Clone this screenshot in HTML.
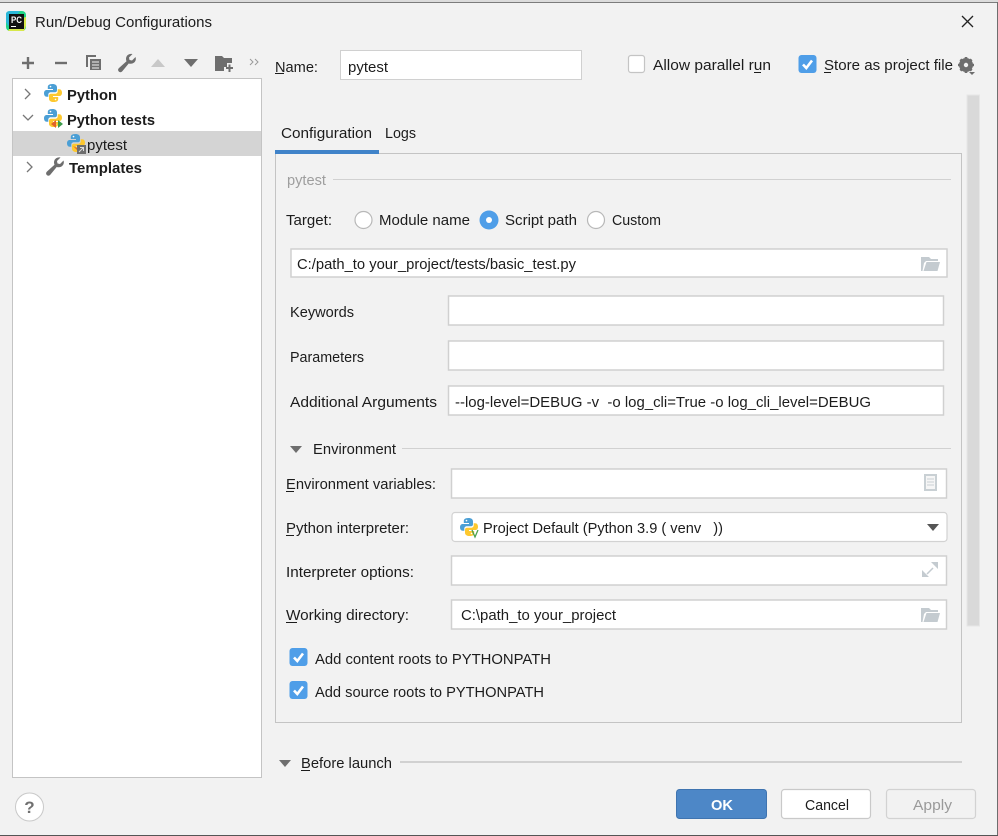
<!DOCTYPE html>
<html><head><meta charset="utf-8"><title>Run/Debug Configurations</title>
<style>
html,body{margin:0;padding:0;background:#f2f2f2;width:998px;height:836px;overflow:hidden}
svg{display:block}
text{font-family:"Liberation Sans",sans-serif;font-size:15px;fill:#1c1c1c}
.b{font-weight:bold}
.f{fill:#fff;stroke:#d0d0d0;stroke-width:1.500}
</style></head><body>
<svg width="998" height="836" viewBox="0 0 998 836" xmlns="http://www.w3.org/2000/svg">
<defs>
<g id="py">
<path d="M8.500 0C4.500 0 3.800 1.500 3.800 3.300V5H9V6H2.800C1 6 0 7.300 0 9.300C0 11.400 1 12.800 2.800 12.800H4.300V10.800C4.300 9.200 5.500 8.300 7 8.300H11C12.200 8.300 13 7.500 13 6.300V3.300C13 1.300 11.200 0 8.500 0Z" fill="#4b9fd5"/>
<path d="M9.500 18C13.500 18 14.200 16.500 14.200 14.700V13H9V12H15.200C17 12 18 10.700 18 8.700C18 6.600 17 5.200 15.200 5.200H13.700V7.200C13.700 8.800 12.500 9.700 11 9.700H7C5.800 9.700 5 10.500 5 11.700V14.700C5 16.700 6.800 18 9.500 18Z" fill="#fdc82f"/>
<circle cx="6.500" cy="2.600" r=".8" fill="#fff"/><circle cx="11.500" cy="15.400" r=".8" fill="#fff"/>
</g>
<g id="chk">
<rect width="18" height="18" rx="3" fill="#4f9ee8"/>
<path d="M4.500 9.500L7.800 13L13.500 5.500" fill="none" stroke="#fff" stroke-width="2.600"/>
</g>
<path id="folder" d="M0 1H8L10 3H17V5H5L3 7L1.500 15H0Z M5.500 6H19L16.500 15H2.500Z" fill="#c4cbd0"/>
<path id="wr" d="M17.500 3.500L14 7 11.500 6.500 11 4 14.500 .5C11.500-.3 8 1.500 8 5.500 8 6.300 8.200 7 8.500 7.700L1 14.500C-.2 15.700-.2 17 .8 18 1.800 19 3.200 19 4.300 17.800L10.700 10C15.500 11.300 19 7.500 17.500 3.500Z" fill="#6e6e6e"/>
</defs>

<!-- window -->
<rect width="998" height="836" fill="#f2f2f2"/>
<rect x="0" y="0" width="998" height="2" fill="#dcdcdc"/>
<rect x="0" y="2" width="998" height="1" fill="#7c7c7c"/>
<rect x="997" y="2" width="1" height="834" fill="#6e6e6e"/>
<rect x="0" y="835" width="998" height="1" fill="#555"/>

<!-- title -->
<rect x="6" y="11" width="20" height="20" rx="4" fill="#21d789"/>
<path d="M8 31L24 31L26 26V17L14 20Z" fill="#d7e84a"/>
<path d="M6 14C6 12 8 11 10 11H20L8 26L6 22Z" fill="#2bb7d8"/>
<rect x="9" y="14" width="15" height="15" fill="#111"/>
<text x="11" y="23" style="font-size:9px;font-weight:bold;fill:#fff" textLength="11" lengthAdjust="spacingAndGlyphs">PC</text>
<rect x="11" y="26" width="5" height="1" fill="#fff"/>
<text x="35" y="27" textLength="177" lengthAdjust="spacingAndGlyphs">Run/Debug Configurations</text>
<path d="M962 16L973 27M973 16L962 27" stroke="#222" stroke-width="1.300" fill="none"/>

<!-- toolbar -->
<path d="M22 63H34M28 57V69" stroke="#6e6e6e" stroke-width="2.400" fill="none"/>
<path d="M55 63H67" stroke="#6e6e6e" stroke-width="2.400" fill="none"/>
<path d="M86 55H96V57H88V67H86Z" fill="#6e6e6e"/><path d="M90 59H101V70H90Z" fill="#6e6e6e"/><path d="M92 62H99M92 65H99M92 68H99" stroke="#f2f2f2" stroke-width="1"/>
<use href="#wr" x="118" y="53.500"/>
<path d="M151 67L158 59L165 67Z" fill="#c8c8c8"/>
<path d="M184 59H198L191 67Z" fill="#6e6e6e"/>
<path d="M215 56H222L224 58H232V63H227V67H224V71H215Z" fill="#6e6e6e"/><path d="M226 68H233M229.500 64.500V72" stroke="#6e6e6e" stroke-width="2"/>
<path d="M250 59L253 62L250 65M255 59L258 62L255 65" stroke="#999" stroke-width="1" fill="none"/>

<!-- left tree -->
<rect x="12.500" y="78.500" width="249" height="699" fill="#fff" stroke="#c4c4c4"/>
<rect x="13" y="131" width="248" height="25" fill="#d4d4d4"/>
<path d="M25 89L30 94L25 99" stroke="#777" stroke-width="1.300" fill="none"/>
<use href="#py" x="44" y="84"/>
<text x="67" y="100" class="b" textLength="50" lengthAdjust="spacingAndGlyphs">Python</text>
<path d="M23 115L28 120L33 115" stroke="#777" stroke-width="1.300" fill="none"/>
<use href="#py" x="44" y="109"/>
<path d="M56 120L51 124L56 128Z" fill="#e0632c"/><path d="M58 120L63 124L58 128Z" fill="#3b9b4a"/>
<text x="67" y="125" class="b" textLength="88" lengthAdjust="spacingAndGlyphs">Python tests</text>
<use href="#py" x="67" y="134"/>
<rect x="77" y="145" width="9" height="9" fill="#6e6e6e"/><path d="M79 152L83 148M80 147.500H83.500V151" stroke="#ddd" stroke-width="1" fill="none"/>
<path d="M73 146L77 148V150Z" fill="#e0632c"/>
<text x="87" y="150" textLength="40" lengthAdjust="spacingAndGlyphs">pytest</text>
<path d="M27 162L32 167L27 172" stroke="#777" stroke-width="1.300" fill="none"/>
<use href="#wr" x="46" y="157"/>
<text x="69" y="173" class="b" textLength="73" lengthAdjust="spacingAndGlyphs">Templates</text>

<!-- top row -->
<text x="275" y="72" textLength="43" lengthAdjust="spacingAndGlyphs">Name:</text>
<rect x="275" y="73" width="9" height="1" fill="#1c1c1c"/>
<rect x="340.500" y="50.500" width="241" height="29" fill="#fff" stroke="#d0d0d0"/>
<text x="348" y="72" textLength="40" lengthAdjust="spacingAndGlyphs">pytest</text>
<rect x="628.500" y="55.500" width="16" height="17" rx="2.500" fill="#fff" stroke="#c4c4c4" stroke-width="1.200"/>
<text x="653" y="70" textLength="118" lengthAdjust="spacingAndGlyphs">Allow parallel run</text>
<rect x="754" y="72" width="7" height="1" fill="#1c1c1c"/>
<use href="#chk" x="798.500" y="55"/>
<text x="824" y="70" textLength="129" lengthAdjust="spacingAndGlyphs">Store as project file</text>
<rect x="824" y="72" width="7" height="1" fill="#1c1c1c"/>
<circle cx="966" cy="65" r="5" fill="none" stroke="#6e6e6e" stroke-width="4"/>
<path d="M966 57V73M958 65H974M960.400 59.400L971.600 70.600M971.600 59.400L960.400 70.600" stroke="#6e6e6e" stroke-width="2.600"/>
<circle cx="966" cy="65" r="2.200" fill="#f2f2f2"/>
<path d="M969 72H975L972 75Z" fill="#6e6e6e"/>

<!-- scrollbar -->
<rect x="967" y="95" width="12.500" height="531" fill="#d9d9d9" stroke="#e6e6e6"/>

<!-- tabs + panel -->
<rect x="275.500" y="153.500" width="686" height="569" fill="#f2f2f2" stroke="#c4c4c4"/>
<rect x="275" y="150" width="104" height="4" fill="#4083c9"/>
<text x="281" y="138" textLength="91" lengthAdjust="spacingAndGlyphs">Configuration</text>
<text x="385" y="138" textLength="31" lengthAdjust="spacingAndGlyphs">Logs</text>

<text x="287" y="185" style="fill:#9e9e9e" textLength="39" lengthAdjust="spacingAndGlyphs">pytest</text>
<rect x="333" y="179" width="618" height="1" fill="#d1d1d1"/>

<text x="286" y="225" textLength="46" lengthAdjust="spacingAndGlyphs">Target:</text>
<circle cx="363.500" cy="220" r="8.500" fill="#fff" stroke="#b8b8b8" stroke-width="1.200"/>
<text x="379" y="225" textLength="91" lengthAdjust="spacingAndGlyphs">Module name</text>
<circle cx="489" cy="220" r="9.500" fill="#4f9ee8"/><circle cx="489" cy="220" r="3" fill="#fff"/>
<text x="505" y="225" textLength="72" lengthAdjust="spacingAndGlyphs">Script path</text>
<circle cx="596" cy="220" r="8.500" fill="#fff" stroke="#b8b8b8" stroke-width="1.200"/>
<text x="612" y="225" textLength="49" lengthAdjust="spacingAndGlyphs">Custom</text>

<rect x="291" y="249" width="656" height="28" class="f"/>
<text x="297" y="269" textLength="279" lengthAdjust="spacingAndGlyphs">C:/path_to your_project/tests/basic_test.py</text>
<use href="#folder" x="921" y="256"/>

<text x="290" y="317" textLength="64" lengthAdjust="spacingAndGlyphs">Keywords</text>
<rect x="448.500" y="296" width="495" height="29" class="f"/>
<text x="290" y="362" textLength="74" lengthAdjust="spacingAndGlyphs">Parameters</text>
<rect x="448.500" y="341" width="495" height="29" class="f"/>
<text x="290" y="407" textLength="147" lengthAdjust="spacingAndGlyphs">Additional Arguments</text>
<rect x="448.500" y="386" width="495" height="29" class="f"/>
<text x="455" y="407" textLength="416" lengthAdjust="spacingAndGlyphs">--log-level=DEBUG -v &#160;-o log_cli=True -o log_cli_level=DEBUG</text>

<path d="M290 446H302L296 453Z" fill="#6e6e6e"/>
<text x="313" y="454" textLength="83" lengthAdjust="spacingAndGlyphs">Environment</text>
<rect x="402" y="448" width="549" height="1" fill="#d1d1d1"/>

<text x="286" y="489" textLength="150" lengthAdjust="spacingAndGlyphs">Environment variables:</text>
<rect x="286" y="491" width="8" height="1" fill="#1c1c1c"/>
<rect x="451.500" y="469" width="495" height="29" class="f"/>
<rect x="924" y="474" width="13" height="17" fill="#c9d0d4"/><rect x="926" y="476" width="9" height="13" fill="#f6f6f6"/>
<path d="M927 479H934M927 482H934M927 485H934" stroke="#c9d0d4" stroke-width="1"/>

<text x="286" y="533" textLength="123" lengthAdjust="spacingAndGlyphs">Python interpreter:</text>
<rect x="286" y="535" width="8" height="1" fill="#1c1c1c"/>
<rect x="452" y="512.500" width="495" height="29" rx="3" fill="#fff" stroke="#d2d2d2" stroke-width="1.200"/>
<use href="#py" x="460" y="518"/>
<path d="M472 530L475 537L478 530" fill="none" stroke="#4aa14f" stroke-width="1.300"/>
<text x="483" y="533" textLength="240" lengthAdjust="spacingAndGlyphs">Project Default (Python 3.9 ( venv &#160; ))</text>
<path d="M927 524H939L933 531Z" fill="#555"/>

<text x="286" y="577" textLength="128" lengthAdjust="spacingAndGlyphs">Interpreter options:</text>
<rect x="451.500" y="556" width="495" height="29" class="f"/>
<path d="M927 574L933 568" fill="none" stroke="#c4cbd0" stroke-width="1.500"/>
<path d="M931 562H938V569Z M922 570V577H929Z" fill="#c4cbd0"/>

<text x="286" y="620" textLength="123" lengthAdjust="spacingAndGlyphs">Working directory:</text>
<rect x="286" y="622" width="11" height="1" fill="#1c1c1c"/>
<rect x="451.500" y="600" width="495" height="29" class="f"/>
<text x="461" y="620" textLength="155" lengthAdjust="spacingAndGlyphs">C:\path_to your_project</text>
<use href="#folder" x="921" y="607"/>

<use href="#chk" x="289.500" y="648"/>
<text x="315" y="664" textLength="236" lengthAdjust="spacingAndGlyphs">Add content roots to PYTHONPATH</text>
<use href="#chk" x="289.500" y="681"/>
<text x="315" y="697" textLength="229" lengthAdjust="spacingAndGlyphs">Add source roots to PYTHONPATH</text>

<path d="M279 760H291L285 767Z" fill="#6e6e6e"/>
<text x="301" y="768" textLength="91" lengthAdjust="spacingAndGlyphs">Before launch</text>
<rect x="301" y="770" width="9" height="1" fill="#1c1c1c"/>
<rect x="400" y="761" width="562" height="2" fill="#d1d1d1"/>

<!-- bottom -->
<circle cx="29.500" cy="807" r="14" fill="#fff" stroke="#c9c9c9" stroke-width="1"/>
<text x="29.500" y="813" text-anchor="middle" class="b" style="font-size:17px;fill:#707070">?</text>
<rect x="676.500" y="789.500" width="90" height="29" rx="3" fill="#4d87c7" stroke="#3f74b0"/>
<text x="711" y="810" class="b" style="fill:#fff" textLength="22" lengthAdjust="spacingAndGlyphs">OK</text>
<rect x="781.500" y="789.500" width="89" height="29" rx="3" fill="#fff" stroke="#c9c9c9" stroke-width="1.200"/>
<text x="805" y="810" textLength="44" lengthAdjust="spacingAndGlyphs">Cancel</text>
<rect x="886.500" y="789.500" width="89" height="29" rx="3" fill="#f2f2f2" stroke="#d2d2d2" stroke-width="1.200"/>
<text x="913" y="810" style="fill:#9a9a9a" textLength="39" lengthAdjust="spacingAndGlyphs">Apply</text>
</svg>
</body></html>
